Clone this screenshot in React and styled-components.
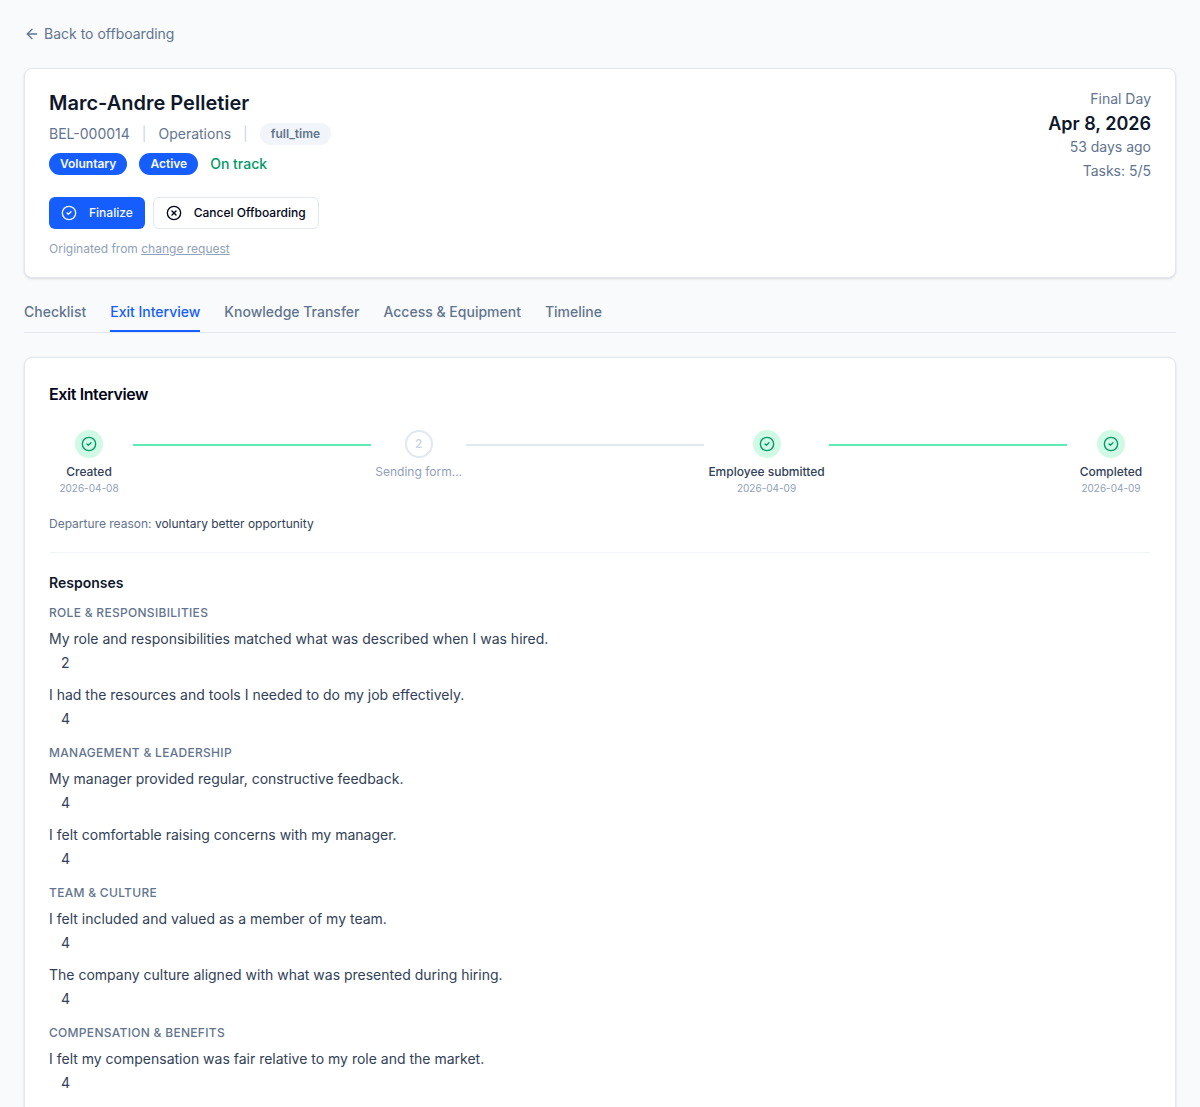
import React from 'react';
import styled, { createGlobalStyle } from 'styled-components';
import { ArrowLeft, CircleCheck, CircleX } from 'lucide-react';

const GlobalStyle = createGlobalStyle`
  *, *::before, *::after {
    box-sizing: border-box;
  }
  body {
    margin: 0;
    background: #f8fafc;
    color: #020618;
    font-family: Inter, sans-serif;
    font-size: 14px;
    line-height: 20px;
    -webkit-font-smoothing: antialiased;
  }
  h1, h2, h3, h4, p {
    margin: 0;
  }
`;

const Page = styled.div`
  height: 1107px;
  overflow: hidden;
  padding: 24px;
`;

const BackLink = styled.a`
  display: flex;
  align-items: center;
  gap: 4px;
  margin-bottom: 24px;
  color: #62748e;
`;

const Card = styled.section`
  padding: ${(props) => props.$pad || '24px'};
  background: #fff;
  border: 1px solid #e2e8f0;
  border-radius: 8px;
  box-shadow: 0 1px 3px 0 rgba(0, 0, 0, 0.1), 0 1px 2px -1px rgba(0, 0, 0, 0.1);
`;

const Header = styled.div`
  display: flex;
  justify-content: space-between;
  align-items: flex-start;
`;

const Name = styled.h1`
  font-size: 20px;
  font-weight: 600;
  line-height: 28px;
  color: #0f172b;
`;

const Meta = styled.div`
  display: flex;
  align-items: center;
  gap: 12px;
  height: 22px;
  margin-top: 6px;
  color: #62748e;
`;

const Separator = styled.span`
  color: #cad5e2;
`;

const Badges = styled.div`
  display: flex;
  align-items: center;
  gap: 12px;
  margin-top: 8px;
`;

const Badge = styled.span`
  padding: 3px 11px;
  border-radius: 999px;
  font-size: 12px;
  font-weight: 600;
  line-height: 16px;
  background: ${(props) => (props.$muted ? '#f1f5f9' : '#155dfc')};
  color: ${(props) => (props.$muted ? '#62748e' : '#f8fafc')};
`;

const Status = styled.span`
  font-weight: 500;
  color: #009966;
`;

const Actions = styled.div`
  display: flex;
  gap: 8px;
  margin-top: 16px;
`;

const Button = styled.button`
  display: flex;
  align-items: center;
  gap: 12px;
  height: 32px;
  padding: 0 12px;
  border: ${(props) => (props.$primary ? '0' : '1px solid #e2e8f0')};
  border-radius: 6px;
  background: ${(props) => (props.$primary ? '#155dfc' : '#fff')};
  color: ${(props) => (props.$primary ? '#f8fafc' : '#020618')};
  font-family: inherit;
  font-size: 12px;
  font-weight: 500;
  line-height: 16px;
`;

const Origin = styled.p`
  margin-top: 12px;
  font-size: 12px;
  line-height: 16px;
  color: #90a1b9;

  a {
    text-decoration: underline;
  }
`;

const FinalDay = styled.div`
  text-align: right;
  color: #62748e;
`;

const FinalDate = styled.p`
  padding-top: 1px;
  font-size: 18px;
  font-weight: 600;
  line-height: 27px;
  color: #0f172b;
`;

const Tasks = styled.p`
  margin-top: 4px;
`;

const Tabs = styled.nav`
  display: flex;
  gap: 24px;
  margin: 24px 0;
  border-bottom: 1px solid #e2e8f0;
`;

const Tab = styled.a`
  padding-bottom: 8px;
  border-bottom: 2px solid ${(props) => (props.$active ? '#155dfc' : 'transparent')};
  color: ${(props) => (props.$active ? '#155dfc' : '#62748e')};
  font-weight: 500;
`;

const CardTitle = styled.h2`
  font-size: 16px;
  font-weight: 600;
  line-height: 24px;
  letter-spacing: -0.4px;
`;

const Steps = styled.div`
  display: flex;
  align-items: flex-start;
  margin-top: 24px;
`;

const StepItem = styled.div`
  display: flex;
  flex-direction: column;
  align-items: center;
  min-width: 80px;
`;

const StepDot = styled.div`
  display: flex;
  align-items: center;
  justify-content: center;
  width: 28px;
  height: 28px;
  border-radius: 50%;
  border: ${(props) => (props.$done ? '0' : '2px solid #e2e8f0')};
  background: ${(props) => (props.$done ? '#d0fae5' : '#fff')};
  color: ${(props) => (props.$done ? '#009966' : '#cad5e2')};
  font-size: 12px;
  font-weight: 500;
`;

const StepLabel = styled.p`
  margin-top: 6px;
  font-size: 12px;
  font-weight: ${(props) => (props.$done ? 500 : 400)};
  line-height: 16px;
  color: ${(props) => (props.$done ? '#314158' : '#90a1b9')};
`;

const StepDate = styled.p`
  margin-top: 1px;
  font-size: 10px;
  line-height: 15px;
  color: #90a1b9;
`;

const StepLine = styled.div`
  flex: 1;
  height: 2px;
  margin: 14px 4px 0;
  background: ${(props) => (props.$done ? '#5ee9b5' : '#e2e8f0')};
`;

const Reason = styled.p`
  margin-top: 20px;
  font-size: 12px;
  line-height: 16px;
  color: #62748e;

  span {
    color: #314158;
  }
`;

const Responses = styled.div`
  margin-top: 20px;
  padding-top: 20px;
  border-top: 1px solid #f1f5f9;
`;

const ResponsesTitle = styled.h3`
  font-size: 14px;
  font-weight: 600;
  line-height: 20px;
  color: #0f172b;
`;

const Group = styled.div`
  display: flex;
  flex-direction: column;
  margin: 12px 0 16px;
`;

const GroupTitle = styled.h4`
  margin-bottom: 8px;
  font-size: 12px;
  font-weight: 500;
  line-height: 16px;
  letter-spacing: 0.3px;
  text-transform: uppercase;
  color: #62748e;
`;

const Question = styled.p`
  color: #314158;
`;

const Answer = styled.p`
  margin: 4px 0 12px;
  padding-left: 12px;
  color: #314158;

  &:last-child {
    margin-bottom: 0;
  }
`;

const tabs = ['Checklist', 'Exit Interview', 'Knowledge Transfer', 'Access & Equipment', 'Timeline'];

const steps = [
  { label: 'Created', date: '2026-04-08', done: true },
  { label: 'Sending form…', done: false },
  { label: 'Employee submitted', date: '2026-04-09', done: true },
  { label: 'Completed', date: '2026-04-09', done: true },
];

const groups = [
  {
    title: 'Role & Responsibilities',
    items: [
      ['My role and responsibilities matched what was described when I was hired.', 2],
      ['I had the resources and tools I needed to do my job effectively.', 4],
    ],
  },
  {
    title: 'Management & Leadership',
    items: [
      ['My manager provided regular, constructive feedback.', 4],
      ['I felt comfortable raising concerns with my manager.', 4],
    ],
  },
  {
    title: 'Team & Culture',
    items: [
      ['I felt included and valued as a member of my team.', 4],
      ['The company culture aligned with what was presented during hiring.', 4],
    ],
  },
  {
    title: 'Compensation & Benefits',
    items: [['I felt my compensation was fair relative to my role and the market.', 4]],
  },
];

const App = () => {
  return (
    <Page>
      <GlobalStyle />
      <BackLink>
        <ArrowLeft size={16} />
        Back to offboarding
      </BackLink>

      <Card $pad="20px 24px">
        <Header>
          <div>
            <Name>Marc-Andre Pelletier</Name>
            <Meta>
              <span>BEL-000014</span>
              <Separator>|</Separator>
              <span>Operations</span>
              <Separator>|</Separator>
              <Badge $muted>full_time</Badge>
            </Meta>
            <Badges>
              <Badge>Voluntary</Badge>
              <Badge>Active</Badge>
              <Status>On track</Status>
            </Badges>
          </div>
          <FinalDay>
            <p>Final Day</p>
            <FinalDate>Apr 8, 2026</FinalDate>
            <p>53 days ago</p>
            <Tasks>Tasks: 5/5</Tasks>
          </FinalDay>
        </Header>
        <Actions>
          <Button $primary>
            <CircleCheck size={16} />
            Finalize
          </Button>
          <Button>
            <CircleX size={16} />
            Cancel Offboarding
          </Button>
        </Actions>
        <Origin>
          Originated from <a>change request</a>
        </Origin>
      </Card>

      <Tabs>
        {tabs.map((tab) => (
          <Tab key={tab} $active={tab === 'Exit Interview'}>
            {tab}
          </Tab>
        ))}
      </Tabs>

      <Card>
        <CardTitle>Exit Interview</CardTitle>
        <Steps>
          {steps.map((step, index) => (
            <React.Fragment key={step.label}>
              {index > 0 && <StepLine $done={steps[index - 1].done} />}
              <StepItem>
                <StepDot $done={step.done}>{step.done ? <CircleCheck size={16} /> : index + 1}</StepDot>
                <StepLabel $done={step.done}>{step.label}</StepLabel>
                {step.date && <StepDate>{step.date}</StepDate>}
              </StepItem>
            </React.Fragment>
          ))}
        </Steps>
        <Reason>
          Departure reason: <span>voluntary better opportunity</span>
        </Reason>
        <Responses>
          <ResponsesTitle>Responses</ResponsesTitle>
          {groups.map((group) => (
            <Group key={group.title}>
              <GroupTitle>{group.title}</GroupTitle>
              {group.items.map(([question, answer]) => (
                <React.Fragment key={question}>
                  <Question>{question}</Question>
                  <Answer>{answer}</Answer>
                </React.Fragment>
              ))}
            </Group>
          ))}
        </Responses>
      </Card>
    </Page>
  );
};

export default App;
